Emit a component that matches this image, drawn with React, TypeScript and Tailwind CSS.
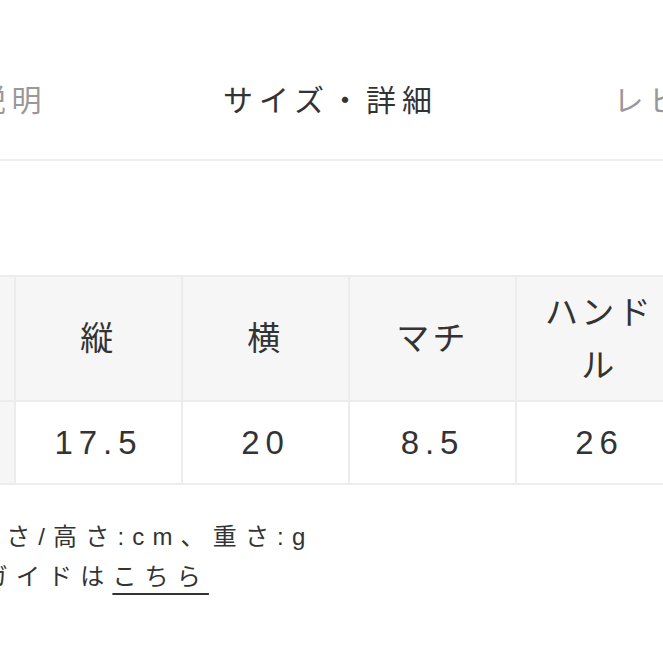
const font = { fontFamily: '"Liberation Sans", "Noto Sans CJK JP", sans-serif' };

const tabs = [
  { label: "商品説明", active: false },
  { label: "サイズ・詳細", active: true },
  { label: "レビュー", active: false },
];

const headers = ["縦", "横", "マチ", "ハンドル"];
const values = ["17.5", "20", "8.5", "26"];

export default function App() {
  return (
    <div className="w-[663px] h-[663px] overflow-hidden bg-white text-[#333]" style={font}>
      {/* Tabs */}
      <div className="h-[161px] border-b-2 border-[#eeeeee] pt-[76px]">
        <div className="flex ml-[-202px]">
          {tabs.map((t) => (
            <div
              key={t.label}
              className={`w-[355px] shrink-0 text-center text-[30px] leading-[50px] tracking-[0.2em] ${
                t.active ? "text-[#333]" : "text-[#999]"
              }`}
            >
              {t.label}
            </div>
          ))}
        </div>
      </div>

      {/* Size table */}
      <table className="mt-[114px] ml-[-103px] w-[785px] table-fixed border-collapse">
        <colgroup>
          <col className="w-[117px]" />
          <col className="w-[167px]" />
          <col className="w-[167px]" />
          <col className="w-[167px]" />
          <col className="w-[167px]" />
        </colgroup>
        <tbody>
          <tr>
            <th className="h-[125px] bg-[#f6f6f6] border-2 border-[#ececec] font-normal">サイズ</th>
            {headers.map((h) => (
              <th
                key={h}
                className="h-[125px] px-[20px] bg-[#f6f6f6] border-2 border-[#ececec] font-normal text-[33px] leading-[53px] tracking-[0.1em]"
              >
                {h}
              </th>
            ))}
          </tr>
          <tr>
            <td className="h-[83px] bg-[#f6f6f6] border-2 border-[#ececec]"></td>
            {values.map((v) => (
              <td
                key={v}
                className="h-[83px] text-center border-2 border-[#ececec] text-[33px] tracking-[0.18em]"
              >
                {v}
              </td>
            ))}
          </tr>
        </tbody>
      </table>

      {/* Notes */}
      <div className="mt-[32px] ml-[-112px] text-[24px] leading-[40px] tracking-[0.34em] whitespace-nowrap">
        <p className="ml-[-8px]">縦/横/長さ/高さ:cm、重さ:g</p>
        <p>
          サイズガイドは
          <a className="underline decoration-2 underline-offset-[8px] decoration-[#333]">こちら</a>
        </p>
      </div>
    </div>
  );
}
